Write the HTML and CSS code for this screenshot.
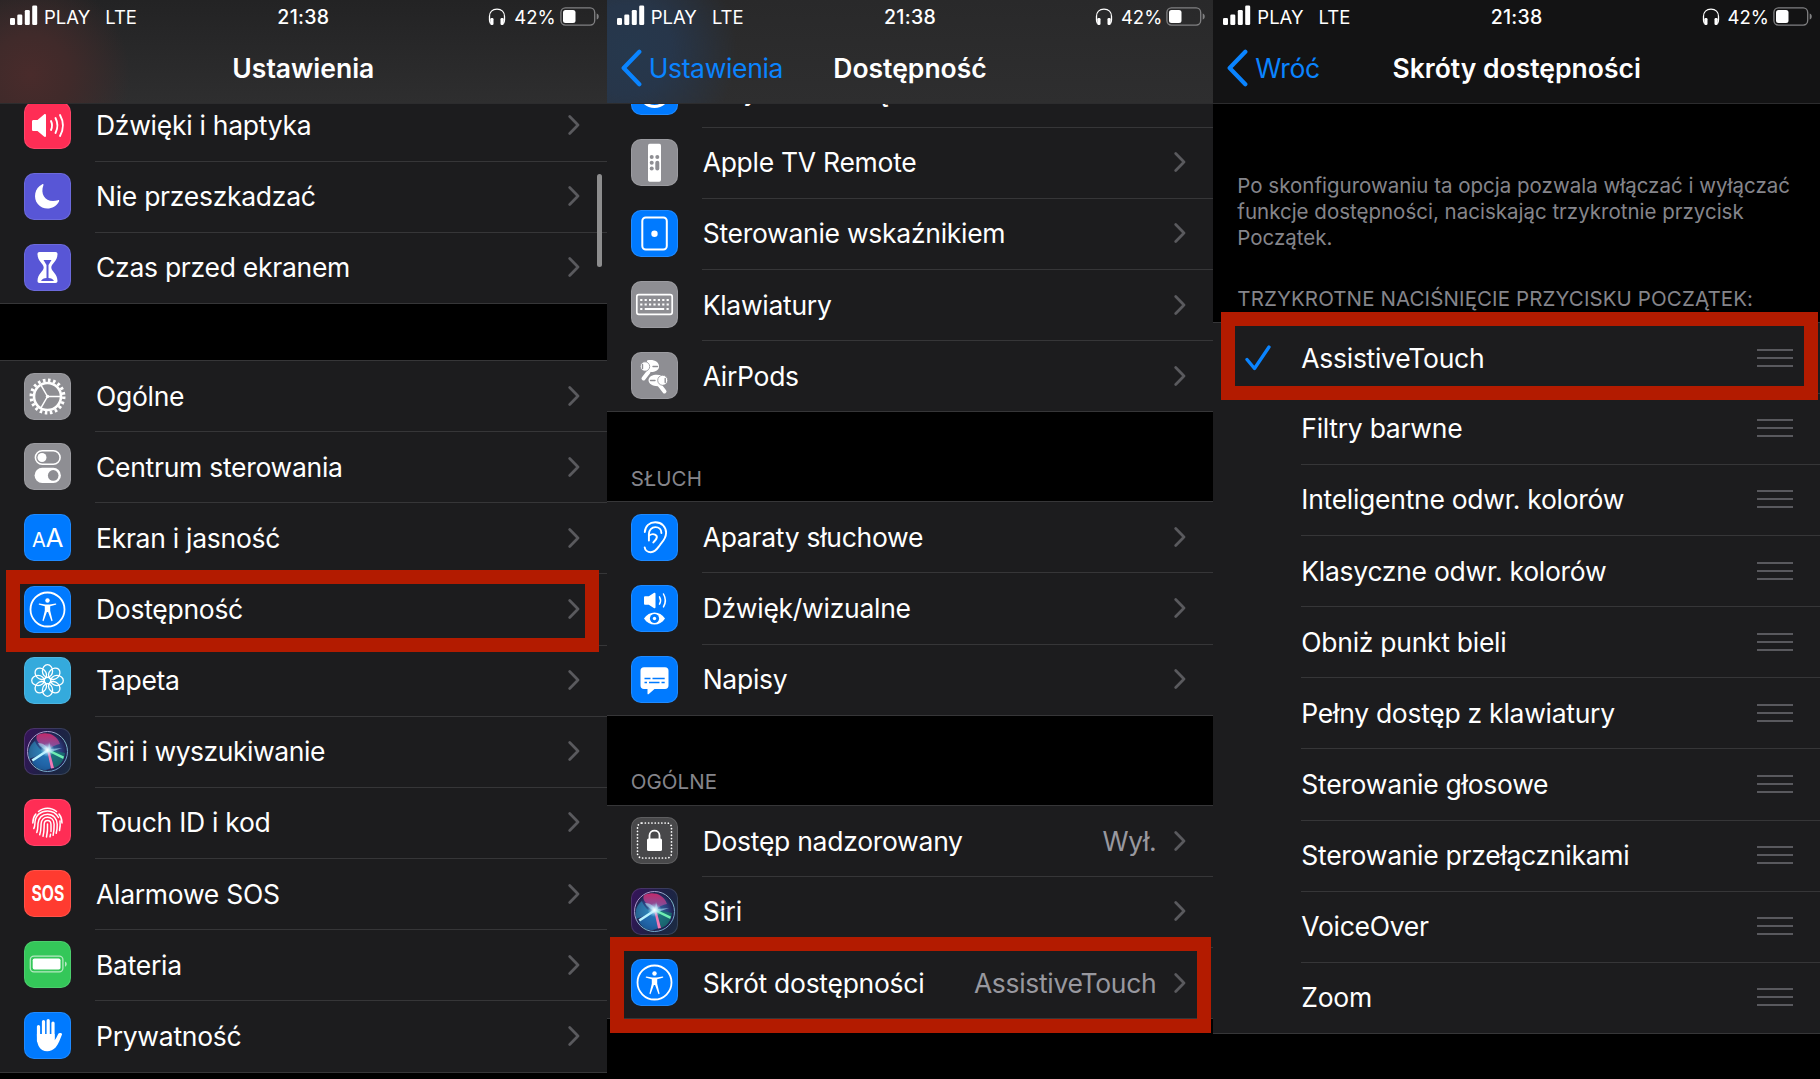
FILE: index.html
```html
<!DOCTYPE html>
<html lang="pl">
<head>
  <meta charset="UTF-8">
  <meta name="viewport" content="width=device-width, initial-scale=1.0">
  <title>Skróty dostępności</title>
  <link rel="stylesheet" href="styles.css">
</head>
<body>
  <svg class="defs" width="0" height="0">
    <defs>
      <symbol id="signal" viewBox="0 0 28 20">
        <rect x="0" y="13" width="5" height="7" rx="1.3"/>
        <rect x="7.3" y="9.5" width="5" height="10.5" rx="1.3"/>
        <rect x="14.8" y="5" width="5" height="15" rx="1.3"/>
        <rect x="22.2" y="0.5" width="5" height="19.5" rx="1.3"/>
      </symbol>
      <symbol id="headphones" viewBox="0 0 18 18">
        <path d="M1.500 12V8.600C1.500 4.200 4.400 1.200 9 1.200s7.500 3 7.500 7.400V12c0 1.500-.5 2.500-1 3.500M1.500 12c0 1.500.5 2.500 1 3.500" fill="none" stroke="#fff" stroke-width="1.300"/>
        <rect x="2.300" y="10" width="3.200" height="7" rx="1.200"/>
        <rect x="12.500" y="10" width="3.200" height="7" rx="1.200"/>
      </symbol>
      <symbol id="battery" viewBox="0 0 39 20">
        <rect x="0.9" y="0.9" width="33.8" height="17.2" rx="4.5" fill="none" stroke="#808082" stroke-width="1.3"/>
        <path d="M36.700 6.500v6c1.700-.6 2-1.700 2-3s-.3-2.400-2-3z" fill="#808082"/>
        <rect x="3" y="3" width="12.5" height="13" rx="2.5"/>
      </symbol>
      <symbol id="back" viewBox="0 0 22 36">
        <path d="M18.500 2.500 3.500 18l15 15.500" fill="none" stroke="#0a84ff" stroke-width="4" stroke-linecap="round" stroke-linejoin="round"/>
      </symbol>
      <symbol id="chevron" viewBox="0 0 12 20">
        <path d="M1.700 1.500 10 10l-8.300 8.500" fill="none" stroke="#5a5a5e" stroke-width="2.700" stroke-linecap="round" stroke-linejoin="round"/>
      </symbol>
      <symbol id="person" viewBox="0 0 47 47">
        <circle cx="23.5" cy="23.5" r="17" fill="none" stroke="#fff" stroke-width="1.800"/>
        <circle cx="23.5" cy="14.500" r="2.200"/>
        <path d="M15.500 17.500l5.700 1h4.600l5.700-1c.9-.1 1.100 1 .2 1.200l-5.500 1.500v4.600l2.300 9.500c.2.900-1 1.300-1.300.3l-3.100-8.600h-1.200l-3.100 8.600c-.3 1-1.500.6-1.300-.3l2.300-9.500v-4.600l-5.500-1.500c-.9-.2-.7-1.300.2-1.200z"/>
      </symbol>
      <symbol id="siri" viewBox="0 0 47 47">
        <circle cx="23.5" cy="23.5" r="20" fill="url(#siri-orb)"/>
        <path d="M23.500 22C19 20 10 12 13 7.500c6-4 19-3 23 8.500-4 .5-8 3-12.500 6z" fill="url(#siri-pink)"/>
        <path d="M5 31c-2-10 2-15 6-18 2 6 6 10 12 11z" fill="#2ba6cf" opacity=".5"/>
        <path d="M8 34l15-11 4 17C19 45 11 40 8 34z" fill="#1b7fc4" opacity=".6"/>
        <path d="M26 22l15 3c-1 8-5 13-11 15z" fill="#147c72" opacity=".7"/>
        <path d="M23 22l4 18.500 3-.5L25.500 23z" fill="#f07ab5"/>
        <path d="M23 21.500L7.500 31.500l1.500 2L25 23z" fill="#baf5ff"/>
        <path d="M24 21l16 7.500-.8 2.500L24 23.500z" fill="#6deeb2"/>
        <path d="M23 22c-4-1-8-4-9-7 5 0 9 3 10 6l1-7 2 7 11-1-11 4z" fill="#a7dcf0" opacity=".65"/>
        <circle cx="23.5" cy="22" r="7" fill="url(#siri-glow)"/>
        <circle cx="23.5" cy="23.5" r="20" fill="none" stroke="url(#siri-ring)" stroke-width="1"/>
      </symbol>
      <radialGradient id="siri-orb">
        <stop offset="0" stop-color="#357bb0"/>
        <stop offset=".7" stop-color="#2b3b7a"/>
        <stop offset="1" stop-color="#1c1c46"/>
      </radialGradient>
      <linearGradient id="siri-pink" x1="0" y1="0" x2="0" y2="1">
        <stop offset="0" stop-color="#c42a6b"/>
        <stop offset="1" stop-color="#a05ab0" stop-opacity=".6"/>
      </linearGradient>
      <radialGradient id="siri-glow">
        <stop offset="0" stop-color="#fff"/>
        <stop offset=".3" stop-color="#d9f6ff" stop-opacity=".85"/>
        <stop offset="1" stop-color="#8fdcff" stop-opacity="0"/>
      </radialGradient>
      <linearGradient id="siri-ring" x1="0" y1="0" x2="1" y2="1">
        <stop offset="0" stop-color="#c58ad0"/>
        <stop offset=".6" stop-color="#7cbcc9"/>
        <stop offset="1" stop-color="#6f8fce"/>
      </linearGradient>
      <symbol id="speaker" viewBox="0 0 47 47">
        <path d="M8 19.500c0-1 .6-1.500 1.500-1.500h4l6.500-5.600c.9-.7 2-.3 2 .9v20.400c0 1.200-1.100 1.600-2 .9L13.500 29h-4c-.9 0-1.500-.5-1.500-1.500z"/>
        <path d="M27 19c1.300 2.800 1.300 6.200 0 9M31.500 16c2.400 4.700 2.400 10.300 0 15M36 13c3.700 6.600 3.700 14.400 0 21" fill="none" stroke="#fff" stroke-width="1.900" stroke-linecap="round"/>
      </symbol>
    </defs>
  </svg>

  <main class="screens">
    <!-- Ustawienia -->
    <section class="phone">
      <header class="top top-red">
        <div class="status">
          <svg class="signal"><use href="#signal"/></svg>
          <span class="carrier">PLAY</span>
          <span class="network">LTE</span>
          <span class="clock">21:38</span>
          <svg class="headphones"><use href="#headphones"/></svg>
          <span class="percent">42%</span>
          <svg class="battery"><use href="#battery"/></svg>
        </div>
        <div class="nav">
          <h1>Ustawienia</h1>
        </div>
      </header>
      <div class="content">
        <ul class="list list-sounds">
          <li class="row">
            <span class="icon pink"><svg viewBox="0 0 47 47"><use href="#speaker"/></svg></span>
            <span class="label">Dźwięki i haptyka</span>
            <svg class="chevron"><use href="#chevron"/></svg>
          </li>
          <li class="row">
            <span class="icon indigo"><svg viewBox="0 0 47 47"><path d="M18.300 11.200C10.500 15 9 25 13.800 31c5.800 7.200 17 5.700 21.300-2.700.3-.8-.3-1.400-1.100-1.100-11.500 3.400-18.300-5-14.600-15 .3-.8-.3-1.400-1.100-1z"/></svg></span>
            <span class="label">Nie przeszkadzać</span>
            <svg class="chevron"><use href="#chevron"/></svg>
          </li>
          <li class="row">
            <span class="icon indigo"><svg viewBox="0 0 47 47"><path fill-rule="evenodd" d="M15.500 8h16c1.300 0 2 .8 2 2 0 7.500-6.200 9.500-6.200 13.500s6.200 6 6.200 13.500c0 1.200-.7 2-2 2h-16c-1.300 0-2-.8-2-2 0-7.500 6.200-9.500 6.200-13.500S13.500 17.500 13.500 10c0-1.200.7-2 2-2zM19.500 16h8l-3 5v13c2.500 0 4.500 1.300 5.500 3H17c1-1.700 3-3 5.500-3V21z"/></svg></span>
            <span class="label">Czas przed ekranem</span>
            <svg class="chevron"><use href="#chevron"/></svg>
          </li>
        </ul>
        <ul class="list list-main">
          <li class="row">
            <span class="icon gray"><svg viewBox="0 0 47 47">
              <circle cx="23.5" cy="23.5" r="16.3" fill="none" stroke="#fff" stroke-width="3.400" stroke-dasharray="2.600 2.520"/>
              <circle cx="23.5" cy="23.5" r="13.500" fill="none" stroke="#fff" stroke-width="2.600"/>
              <path d="M23.500 23.500H37M23.500 23.500l-6.700-11.700M23.500 23.500l-6.700 11.700" stroke="#fff" stroke-width="1.500"/>
              <circle cx="23.5" cy="23.5" r="1.7"/>
            </svg></span>
            <span class="label">Ogólne</span>
            <svg class="chevron"><use href="#chevron"/></svg>
          </li>
          <li class="row">
            <span class="icon gray"><svg viewBox="0 0 47 47">
              <rect x="11.4" y="7.7" width="24.7" height="13.6" rx="6.8" fill="none" stroke="#fff" stroke-width="1.6"/>
              <circle cx="18" cy="14.5" r="4.5"/>
              <rect x="10.6" y="24.8" width="26.3" height="15.2" rx="7.6"/>
              <circle cx="29.2" cy="32.4" r="5.3" fill="#8e8e93"/>
            </svg></span>
            <span class="label">Centrum sterowania</span>
            <svg class="chevron"><use href="#chevron"/></svg>
          </li>
          <li class="row">
            <span class="icon blue letters"><small>A</small>A</span>
            <span class="label">Ekran i jasność</span>
            <svg class="chevron"><use href="#chevron"/></svg>
          </li>
          <li class="row">
            <span class="icon blue"><svg viewBox="0 0 47 47"><use href="#person"/></svg></span>
            <span class="label">Dostępność</span>
            <svg class="chevron"><use href="#chevron"/></svg>
            <span class="mark mark-settings"></span>
          </li>
          <li class="row">
            <span class="icon sky"><svg viewBox="0 0 47 47"><g fill="none" stroke="#fff" stroke-width="1.3">
              <ellipse cx="23.5" cy="14" rx="5.100" ry="6.300"/>
              <ellipse cx="23.5" cy="14" rx="5.100" ry="6.300" transform="rotate(45 23.5 23.5)"/>
              <ellipse cx="23.5" cy="14" rx="5.100" ry="6.300" transform="rotate(90 23.5 23.5)"/>
              <ellipse cx="23.5" cy="14" rx="5.100" ry="6.300" transform="rotate(135 23.5 23.5)"/>
              <ellipse cx="23.5" cy="14" rx="5.100" ry="6.300" transform="rotate(180 23.5 23.5)"/>
              <ellipse cx="23.5" cy="14" rx="5.100" ry="6.300" transform="rotate(225 23.5 23.5)"/>
              <ellipse cx="23.5" cy="14" rx="5.100" ry="6.300" transform="rotate(270 23.5 23.5)"/>
              <ellipse cx="23.5" cy="14" rx="5.100" ry="6.300" transform="rotate(315 23.5 23.5)"/>
              <circle cx="23.5" cy="23.5" r="3.2"/>
            </g></svg></span>
            <span class="label">Tapeta</span>
            <svg class="chevron"><use href="#chevron"/></svg>
          </li>
          <li class="row">
            <span class="icon siri"><svg viewBox="0 0 47 47"><use href="#siri"/></svg></span>
            <span class="label tight">Siri i wyszukiwanie</span>
            <svg class="chevron"><use href="#chevron"/></svg>
          </li>
          <li class="row">
            <span class="icon pink"><svg viewBox="0 0 47 47"><g fill="none" stroke="#fff" stroke-width="1.5" stroke-linecap="round">
              <path d="M14.500 12.500c5-4.500 13-4.500 18 0"/>
              <path d="M8.800 24c0-3.500 1-6.500 3-9M9.800 29.500c1.200-2 1-4 1.200-6.500.6-7 6-11 12.500-11 5 0 9 2.500 11 6.500M38 24c0-3.500-1-6.500-3-9M36 22c.4 3 .2 6-.5 9.500"/>
              <path d="M12.800 33.500c1.200-3 1-6 1.200-9 .4-6 4.500-9.300 9.500-9.300 6 0 9.500 4.500 9.700 10 .1 3-.2 6-1 9"/>
              <path d="M15.700 35.800c1.400-4 1.200-7.500 1.400-11 .3-4 3-6.500 6.400-6.500 4 0 6.500 3 6.600 7 .1 4-.1 7-1 11"/>
              <path d="M19 37.200c1.300-4 1-8 1.200-12 .1-2.300 1.400-3.700 3.300-3.700s3.400 1.500 3.500 4c.1 3 0 5 0 7M26.500 35.300l-.5 2.500"/>
              <path d="M23.500 25c.3 4.500 0 8.500-1 13"/>
            </g></svg></span>
            <span class="label">Touch ID i kod</span>
            <svg class="chevron"><use href="#chevron"/></svg>
          </li>
          <li class="row">
            <span class="icon red sos"><b>SOS</b></span>
            <span class="label">Alarmowe SOS</span>
            <svg class="chevron"><use href="#chevron"/></svg>
          </li>
          <li class="row">
            <span class="icon green"><svg viewBox="0 0 47 47">
              <rect x="6.3" y="15.2" width="32.6" height="15.6" rx="3.5" fill="none" stroke="#b5e9c1" stroke-width="1.3"/>
              <rect x="8.7" y="17.5" width="27.8" height="11" rx="1.8"/>
              <path d="M41 20.500v5.200c2.300-1.100 2.300-4.100 0-5.200z" fill="#b5e9c1"/>
            </svg></span>
            <span class="label">Bateria</span>
            <svg class="chevron"><use href="#chevron"/></svg>
          </li>
          <li class="row">
            <span class="icon blue"><svg viewBox="0 0 47 47">
              <path d="M14.500 14.500V29M19.500 9.500V26M24.200 8.500V26M29 11V27" stroke="#fff" stroke-width="3.200" stroke-linecap="round"/>
              <path d="M12.900 22h17.700v6.200c1.400-1.500 2.400-3.700 3.600-6.200.8-1.500 4.300-1.500 3.800.6-1.700 4-3.300 9.400-6.400 13-5 5.500-14.200 4.700-17-1.600-1.300-3-1.700-6.500-1.700-12z"/>
            </svg></span>
            <span class="label">Prywatność</span>
            <svg class="chevron"><use href="#chevron"/></svg>
          </li>
        </ul>
        <span class="scrollbar"></span>
      </div>
    </section>

    <!-- Dostępność -->
    <section class="phone">
      <header class="top top-blue">
        <div class="status">
          <svg class="signal"><use href="#signal"/></svg>
          <span class="carrier">PLAY</span>
          <span class="network">LTE</span>
          <span class="clock">21:38</span>
          <svg class="headphones"><use href="#headphones"/></svg>
          <span class="percent">42%</span>
          <svg class="battery"><use href="#battery"/></svg>
        </div>
        <div class="nav">
          <a class="back"><svg><use href="#back"/></svg>Ustawienia</a>
          <h1>Dostępność</h1>
        </div>
      </header>
      <div class="content">
        <ul class="list list-devices">
          <li class="row">
            <span class="icon blue"><svg viewBox="0 0 47 47"><circle cx="23.5" cy="24" r="14.5" fill="none" stroke="#fff" stroke-width="3"/></svg></span>
            <span class="label">Przycisk Początek</span>
            <svg class="chevron"><use href="#chevron"/></svg>
          </li>
          <li class="row">
            <span class="icon gray"><svg viewBox="0 0 47 47">
              <rect x="17" y="4.8" width="13" height="38" rx="1.7"/>
              <g fill="#8e8e93"><circle cx="20.7" cy="18" r="2"/><circle cx="26.3" cy="18" r="2"/><circle cx="20.7" cy="23.8" r="2"/><circle cx="20.7" cy="29.5" r="2"/><rect x="24.3" y="21.8" width="4" height="9.7" rx="2"/></g>
            </svg></span>
            <span class="label">Apple TV Remote</span>
            <svg class="chevron"><use href="#chevron"/></svg>
          </li>
          <li class="row">
            <span class="icon blue"><svg viewBox="0 0 47 47"><rect x="11.3" y="7.5" width="24.5" height="32" rx="3.5" fill="none" stroke="#fff" stroke-width="2"/><circle cx="23.5" cy="23.7" r="3.2"/></svg></span>
            <span class="label">Sterowanie wskaźnikiem</span>
            <svg class="chevron"><use href="#chevron"/></svg>
          </li>
          <li class="row">
            <span class="icon gray"><svg viewBox="0 0 47 47">
              <rect x="5.8" y="13.7" width="35.4" height="19.6" rx="2" fill="none" stroke="#fff" stroke-width="1.7"/>
              <path d="M9.200 19h29M9.200 23.500h29" stroke="#fff" stroke-width="2.200" stroke-dasharray="2.200 2.200"/>
              <path d="M9.200 28h2.200M13.700 28h19.500M35.500 28h2.200" stroke="#fff" stroke-width="2.200"/>
            </svg></span>
            <span class="label">Klawiatury</span>
            <svg class="chevron"><use href="#chevron"/></svg>
          </li>
          <li class="row">
            <span class="icon gray"><svg viewBox="0 0 47 47">
              <path d="M17.500 20l-5 6.500M28.500 33l5 6.500" stroke="#fff" stroke-width="4" stroke-linecap="round"/>
              <path d="M16 8.500c6-1.500 12.500 1 12 6.500-.5 5-8 6-13 4zM31 23.500c-6-2-13-.5-13.500 4.500-.2 5 7.500 7.500 13.500 5.500z"/>
              <circle cx="14" cy="14.5" r="4.7" stroke="#8e8e93" stroke-width=".8"/>
              <circle cx="31.7" cy="28.3" r="5" stroke="#8e8e93" stroke-width=".8"/>
              <path d="M22 14.500h4.500M19.500 28.500H24M11.500 12.500v4M34.200 26.500v4" stroke="#8e8e93" stroke-width="1.400" stroke-linecap="round"/>
            </svg></span>
            <span class="label">AirPods</span>
            <svg class="chevron"><use href="#chevron"/></svg>
          </li>
        </ul>
        <h2 class="group-title">SŁUCH</h2>
        <ul class="list">
          <li class="row">
            <span class="icon blue"><svg viewBox="0 0 47 47"><g fill="none" stroke="#fff" stroke-width="1.9" stroke-linecap="round">
              <path d="M13.800 18c.4-6 4.700-9.700 10.500-9.700 6.500 0 10.800 4.500 10.800 10.500 0 5.500-3 8.500-6 12-2.500 3-4.200 7.400-9.300 7.400-3.300 0-5.800-2-6.100-4.800"/>
              <path d="M17.900 26.500V20c0-4 2.800-6.900 6.500-6.900 3.500 0 6 2.400 6 5.900"/>
              <path d="M18 21.500c4.500-3 9-.5 7.500 3-.8 1.700-2.200 2.600-3.200 4"/>
            </g></svg></span>
            <span class="label">Aparaty słuchowe</span>
            <svg class="chevron"><use href="#chevron"/></svg>
          </li>
          <li class="row">
            <span class="icon blue"><svg viewBox="0 0 47 47">
              <path d="M13 12.500c0-.8.500-1.300 1.300-1.300h3.500l5-3.300c1-.5 1.700-.2 1.700.8v13.500c0 1-.7 1.300-1.700.8l-5-3.300h-3.500c-.8 0-1.300-.5-1.300-1.300z"/>
              <path d="M28.500 11.800c1.300 2.300 1.300 5 0 7.300M32.500 9c2.400 4.200 2.400 8.700 0 12.900" fill="none" stroke="#fff" stroke-width="1.500" stroke-linecap="round"/>
              <path d="M13 33.500c5-8 16-8 21 0-5 8-16 8-21 0z"/>
              <circle cx="23.5" cy="33.5" r="4.6" fill="#007aff"/>
              <circle cx="23.5" cy="33.5" r="1.7"/>
            </svg></span>
            <span class="label">Dźwięk/wizualne</span>
            <svg class="chevron"><use href="#chevron"/></svg>
          </li>
          <li class="row">
            <span class="icon blue"><svg viewBox="0 0 47 47">
              <path d="M13 11.200h21c2.300 0 3.500 1.300 3.500 3.500v14.800c0 2.200-1.200 3.500-3.500 3.500H23.500l-5.700 5c-.7.600-1.300.3-1.300-.6V33H13c-2.300 0-3.500-1.300-3.500-3.500V14.700c0-2.200 1.200-3.500 3.500-3.500z"/>
              <path d="M13.500 22.500h6M21.500 22.500h12.200M13.500 26.500H16M18 26.500h10.500M30.500 26.500h3.200" stroke="#007aff" stroke-width="1.400"/>
            </svg></span>
            <span class="label">Napisy</span>
            <svg class="chevron"><use href="#chevron"/></svg>
          </li>
        </ul>
        <h2 class="group-title">OGÓLNE</h2>
        <ul class="list">
          <li class="row">
            <span class="icon dark"><svg viewBox="0 0 47 47">
              <rect x="6.5" y="6" width="34" height="35" rx="4.5" fill="none" stroke="#fff" stroke-width="1.7" stroke-dasharray="0.1 3.2" stroke-linecap="round"/>
              <rect x="16" y="21.5" width="15" height="12.5" rx="1.5"/>
              <path d="M18.500 22v-3.500c0-6.500 10-6.500 10 0V22" fill="none" stroke="#fff" stroke-width="1.800"/>
            </svg></span>
            <span class="label">Dostęp nadzorowany</span>
            <span class="value">Wył.</span>
            <svg class="chevron"><use href="#chevron"/></svg>
          </li>
          <li class="row">
            <span class="icon siri"><svg viewBox="0 0 47 47"><use href="#siri"/></svg></span>
            <span class="label">Siri</span>
            <svg class="chevron"><use href="#chevron"/></svg>
          </li>
          <li class="row">
            <span class="icon blue"><svg viewBox="0 0 47 47"><use href="#person"/></svg></span>
            <span class="label">Skrót dostępności</span>
            <span class="value">AssistiveTouch</span>
            <svg class="chevron"><use href="#chevron"/></svg>
            <span class="mark mark-shortcut"></span>
          </li>
        </ul>
      </div>
    </section>

    <!-- Skróty dostępności -->
    <section class="phone">
      <header class="top">
        <div class="status">
          <svg class="signal"><use href="#signal"/></svg>
          <span class="carrier">PLAY</span>
          <span class="network">LTE</span>
          <span class="clock">21:38</span>
          <svg class="headphones"><use href="#headphones"/></svg>
          <span class="percent">42%</span>
          <svg class="battery"><use href="#battery"/></svg>
        </div>
        <div class="nav">
          <a class="back"><svg><use href="#back"/></svg>Wróć</a>
          <h1>Skróty dostępności</h1>
        </div>
      </header>
      <div class="content">
        <p class="hint">Po skonfigurowaniu ta opcja pozwala włączać i wyłączać<br>funkcje dostępności, naciskając trzykrotnie przycisk<br>Początek.</p>
        <h2 class="group-title group-title-triple">TRZYKROTNE NACIŚNIĘCIE PRZYCISKU POCZĄTEK:</h2>
        <ul class="list options">
          <li class="row">
            <svg class="check" viewBox="0 0 26 26"><path d="M2 14.500l7.500 9L24 2" fill="none" stroke="#0a84ff" stroke-width="3.300" stroke-linecap="round" stroke-linejoin="round"/></svg>
            <span class="label">AssistiveTouch</span>
            <span class="handle"></span>
            <span class="mark mark-touch"></span>
          </li>
          <li class="row"><span class="label">Filtry barwne</span><span class="handle"></span></li>
          <li class="row"><span class="label">Inteligentne odwr. kolorów</span><span class="handle"></span></li>
          <li class="row"><span class="label">Klasyczne odwr. kolorów</span><span class="handle"></span></li>
          <li class="row"><span class="label">Obniż punkt bieli</span><span class="handle"></span></li>
          <li class="row"><span class="label">Pełny dostęp z klawiatury</span><span class="handle"></span></li>
          <li class="row"><span class="label">Sterowanie głosowe</span><span class="handle"></span></li>
          <li class="row"><span class="label">Sterowanie przełącznikami</span><span class="handle"></span></li>
          <li class="row"><span class="label">VoiceOver</span><span class="handle"></span></li>
          <li class="row"><span class="label">Zoom</span><span class="handle"></span></li>
        </ul>
      </div>
    </section>
  </main>
</body>
</html>
```
FILE: styles.css
```css
* {
  margin: 0;
  padding: 0;
  box-sizing: border-box;
}
body {
  height: 1079px;
  background-color: #000;
  color: #fff;
  font-family: Inter, "Liberation Sans", sans-serif;
  overflow: hidden;
}
svg {
  display: block;
  fill: #fff;
}
.defs {
  position: absolute;
}
.screens {
  display: grid;
  grid-template-columns: repeat(3, 1fr);
  height: 1079px;
}
.phone {
  display: flex;
  flex-direction: column;
  height: 1079px;
  min-width: 0;
}

/* header */
.top {
  flex: none;
  height: 104px;
  background-color: #131314;
  border-bottom: 1px solid #2c2c2e;
}
.top-red {
  background: radial-gradient(circle at 30px 75px, #492b2b 0, #402a2a 40px, rgba(43, 43, 44, 0) 100px), linear-gradient(#232324, #2e2e2f);
}
.top-blue {
  background: radial-gradient(circle at 20px 50px, #26384d 0, #27364a 45px, rgba(43, 43, 44, 0) 110px), linear-gradient(#29292a, #2e2e2f);
}
.status {
  position: relative;
  display: flex;
  align-items: center;
  height: 33px;
  padding: 0 8px 0 10px;
  font-size: 18.5px;
}
.signal {
  width: 28px;
  height: 20px;
  margin-top: -3px;
}
.carrier {
  margin-left: 6px;
}
.network {
  margin-left: 15px;
}
.clock {
  position: absolute;
  left: 0;
  width: 100%;
  text-align: center;
  font-weight: 500;
  font-size: 19.5px;
  letter-spacing: 0.3px;
}
.headphones {
  width: 18px;
  height: 18px;
  margin-left: auto;
}
.percent {
  margin: 0 4px 0 8px;
}
.battery {
  width: 39px;
  height: 20px;
}
.nav {
  position: relative;
  display: flex;
  align-items: center;
  height: 69px;
  padding-left: 13px;
}
h1 {
  position: absolute;
  left: 0;
  width: 100%;
  text-align: center;
  font-size: 26.5px;
  font-weight: 600;
}
.back {
  display: flex;
  align-items: center;
  color: #0a84ff;
  font-size: 26.5px;
  letter-spacing: -0.35px;
}
.back svg {
  width: 23px;
  height: 38px;
  margin-right: 6px;
}

/* lists */
.content {
  position: relative;
  flex: 1;
  min-height: 0;
  overflow: hidden;
}
.list {
  margin-bottom: -1px;
  list-style: none;
  background-color: #1c1c1e;
  border-bottom: 1px solid #363638;
}
.list-sounds {
  margin-top: -14.5px;
}
.list-main {
  margin-top: 57px;
  border-top: 1px solid #363638;
}
.list-devices {
  margin-top: -48.5px;
}
.row {
  position: relative;
  display: flex;
  align-items: center;
  height: 71.17px;
  padding: 0 27px 0 24px;
}
.list-main .row:first-child,
.group-title + .list .row:first-child {
  height: 70.17px;
}
.row + .row::before {
  content: "";
  position: absolute;
  top: 0;
  left: 95px;
  right: 0;
  height: 1px;
  background-color: #363638;
}
.icon {
  flex: none;
  width: 47px;
  height: 47px;
  margin-right: 25px;
  border-radius: 10px;
  box-shadow: inset 0 0 0 1px rgba(255, 255, 255, 0.12);
}
.label {
  flex: 1;
  font-size: 26.5px;
  letter-spacing: -0.28px;
  white-space: nowrap;
}
.label.tight {
  letter-spacing: -0.45px;
}
.value {
  margin-right: 18px;
  color: #98989f;
  font-size: 26.5px;
  letter-spacing: -0.32px;
}
.chevron {
  width: 12px;
  height: 20px;
}
.pink { background-color: #ff2d55; }
.indigo { background-color: #5856d6; }
.gray { background-color: #8e8e93; }
.blue { background-color: #007aff; }
.sky { background-color: #34aadc; }
.red { background-color: #ff3b30; }
.green { background-color: #34c759; }
.dark { background-color: #48484a; }
.siri { background: linear-gradient(110deg, #38135b, #1d2145 55%, #1b2c42); }
.letters {
  display: flex;
  justify-content: center;
  align-items: baseline;
  padding-top: 8px;
  font-size: 26px;
  letter-spacing: -0.5px;
}
.letters small {
  font-size: 20px;
}
.sos {
  display: flex;
  justify-content: center;
  align-items: center;
}
.sos b {
  font-size: 21px;
  transform: scaleX(0.75);
}
.group-title {
  height: 91px;
  padding: 54.5px 0 0 24px;
  border-bottom: 1px solid #363638;
  color: #85858b;
  font-size: 20.5px;
  font-weight: 400;
  line-height: 25px;
  letter-spacing: 0.1px;
  white-space: nowrap;
}
.hint {
  padding: 69px 0 0 24px;
  color: #85858b;
  font-size: 20.5px;
  line-height: 26px;
  white-space: nowrap;
}
.group-title-triple {
  height: 71.5px;
  padding-top: 35px;
}
.options .row {
  padding: 0 27px 0 88px;
}
.options .row + .row::before {
  left: 88px;
}
.check {
  position: absolute;
  left: 32px;
  top: 22px;
  width: 26px;
  height: 26px;
}
.handle {
  width: 36px;
  height: 18px;
  border-top: 2px solid #59595e;
  border-bottom: 2px solid #59595e;
  background: linear-gradient(#59595e, #59595e) center / 100% 2px no-repeat;
}
.scrollbar {
  position: absolute;
  top: 70px;
  right: 5px;
  width: 5px;
  height: 93px;
  border-radius: 3px;
  background-color: #8d8d8e;
}

/* red frames over the tapped rows */
.mark {
  position: absolute;
  z-index: 2;
  border: 14px solid #b31b00;
}
.mark-settings {
  left: 6px;
  right: 8px;
  top: -3px;
  height: 82px;
}
.mark-shortcut {
  left: 3px;
  right: 2px;
  top: -10px;
  height: 96px;
}
.mark-touch {
  left: 8px;
  right: 2px;
  top: -11px;
  height: 88px;
}
```
